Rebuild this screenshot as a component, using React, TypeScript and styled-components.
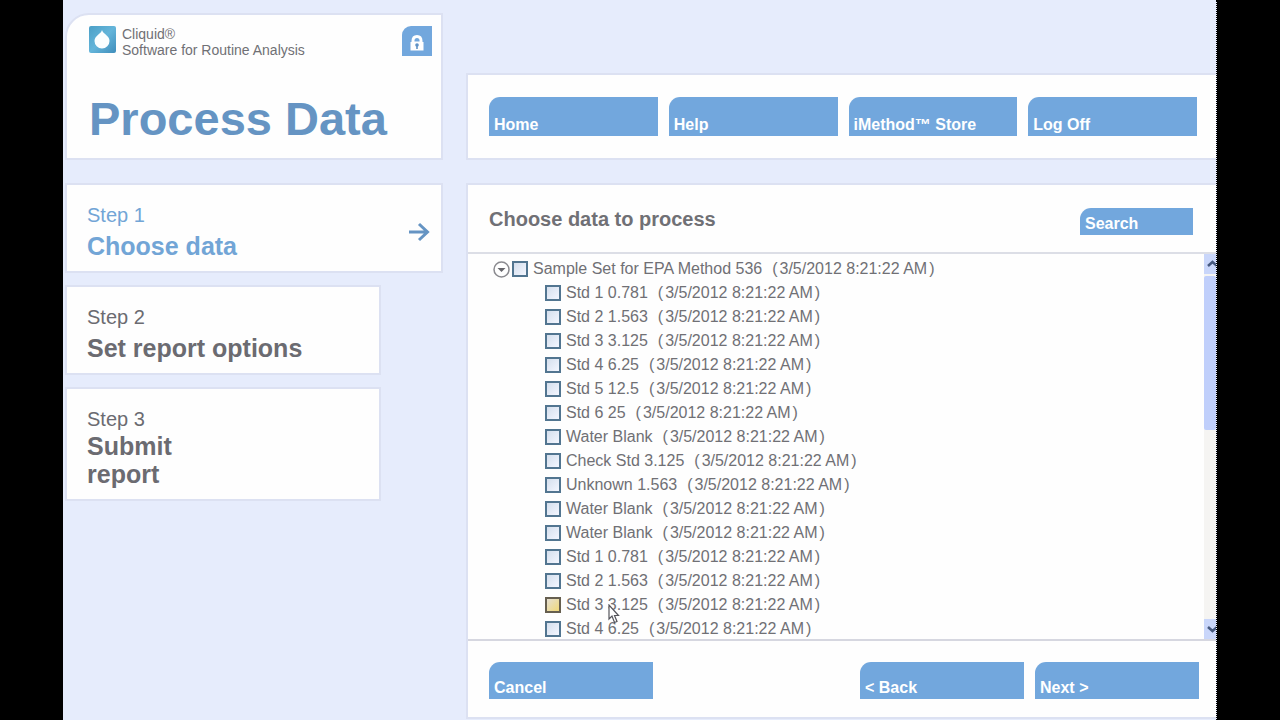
import React from "react";
import styled, { createGlobalStyle } from "styled-components";

const GlobalStyle = createGlobalStyle`
  * { box-sizing: border-box; }
  body {
    margin: 0;
    background: #000;
    font-family: "Liberation Sans", Arial, sans-serif;
    color: #707075;
  }
  button { font-family: inherit; cursor: pointer; }
`;

const Screen = styled.div`
  display: grid;
  grid-template-columns: 378px minmax(0, 1fr);
  grid-template-rows: auto 1fr;
  column-gap: 23px;
  row-gap: 23px;
  min-height: 100vh;
  margin: 0 63px;
  padding: 13px 0 1px 2px;
  background: #e6ecfc;
  border-right: 1px dotted #000;
`;

const Card = styled.section`
  background: #fefefe;
  border: 2px solid #dce1f2;
`;

const TitleCard = styled(Card)`
  display: flex;
  flex-direction: column;
  gap: 33px;
  padding: 11px 9px 11px 22px;
  border-top-left-radius: 24px;
`;

const Brand = styled.header`
  display: flex;
  align-items: flex-start;
  gap: 6px;
`;

const BrandText = styled.p`
  flex: 1;
  margin: 0;
  font-size: 14px;
  line-height: 16px;
`;

const LockButton = styled.button`
  display: flex;
  align-items: flex-end;
  justify-content: center;
  width: 30px;
  height: 30px;
  padding: 0 0 5px;
  border: 0;
  border-top-left-radius: 9px;
  background: #72a7dd;
`;

const PageTitle = styled.h1`
  margin: 0;
  font-size: 47px;
  line-height: 56px;
  color: #6594c3;
`;

const NavCard = styled(Card)`
  align-self: end;
  display: grid;
  grid-template-columns: repeat(4, 1fr);
  gap: 11px;
  padding: 22px 19px 22px 21px;
  border-right: 0;
`;

const ActionButton = styled.button<{ $width?: number; $height: number }>`
  width: ${(p) => (p.$width ? `${p.$width}px` : "100%")};
  height: ${(p) => p.$height}px;
  display: flex;
  align-items: flex-end;
  padding: 0 5px 2px;
  border: 0;
  border-top-left-radius: 11px;
  background: #72a7dd;
  color: #fff;
  font-size: 16px;
  font-weight: 700;
  line-height: 18px;
  text-align: left;
`;

const Steps = styled.nav`
  display: flex;
  flex-direction: column;
  align-items: flex-start;
  gap: 12px;
`;

const StepCard = styled.a<{ $active?: boolean }>`
  display: flex;
  align-items: center;
  justify-content: space-between;
  width: ${(p) => (p.$active ? "100%" : "316px")};
  padding: 18px 11px 11px 20px;
  background: #fefefe;
  border: 2px solid #dce1f2;
  color: ${(p) => (p.$active ? "#72a5d6" : "#6b6b71")};
  text-decoration: none;
`;

const StepText = styled.span<{ $tight?: boolean }>`
  display: flex;
  flex-direction: column;
  gap: ${(p) => (p.$tight ? 1 : 5)}px;
`;

const StepNumber = styled.span`
  font-size: 20px;
  line-height: 24px;
`;

const StepName = styled.strong`
  font-size: 25px;
  line-height: 28px;
  white-space: pre-line;
`;

const Panel = styled(Card)`
  display: flex;
  flex-direction: column;
  border-right: 0;
`;

const PanelHeader = styled.header`
  display: flex;
  align-items: center;
  justify-content: space-between;
  padding: 22px 23px 17px 21px;
`;

const PanelTitle = styled.h2`
  margin: 0 0 4px;
  font-size: 20px;
  line-height: 24px;
`;

const ListArea = styled.div`
  display: flex;
  height: 389px;
  overflow: hidden;
  border-top: 2px solid #dcdee6;
  border-bottom: 2px solid #d6d7e0;
`;

const Tree = styled.ul`
  flex: 1;
  margin: 0;
  padding: 3px 0 0 25px;
  list-style: none;
`;

const Children = styled.ul`
  margin: 0;
  padding: 0 0 0 52px;
  list-style: none;
`;

const Row = styled.div`
  position: relative;
  display: flex;
  align-items: center;
  gap: 2px;
  height: 24px;
`;

const Toggle = styled.button`
  display: flex;
  padding: 0;
  border: 0;
  background: none;
`;

const CheckLabel = styled.label`
  display: flex;
  align-items: center;
  font-size: 16px;
  line-height: 24px;
  white-space: nowrap;
`;

const Checkbox = styled.input<{ $hover?: boolean }>`
  appearance: none;
  width: 16px;
  height: 16px;
  margin: 0 5px 0 0;
  border: 2px solid ${(p) => (p.$hover ? "#665f50" : "#527590")};
  background: ${(p) =>
    p.$hover
      ? "linear-gradient(135deg, #e6e0d4, #f0d878)"
      : "linear-gradient(135deg, #d5dfed, #f3f6ff)"};
`;

const Stamp = styled.span`
  display: flex;
  gap: 2px;
  margin-left: 10px;
`;

const Pointer = styled.svg`
  position: absolute;
  left: 63px;
  top: 11px;
  z-index: 1;
`;

const ScrollBar = styled.div`
  display: flex;
  flex-direction: column;
  width: 12px;
  background: #f5f4f2;
`;

const ScrollArrow = styled.button`
  display: flex;
  align-items: center;
  justify-content: flex-end;
  height: 20px;
  padding: 0;
  border: 0;
  background: #c9d6fa;
`;

const ScrollTrack = styled.div`
  flex: 1;
  padding-top: 2px;
`;

const ScrollThumb = styled.div`
  height: 45%;
  border-radius: 2px;
  background: #c0cffb;
`;

const PanelFooter = styled.footer`
  display: flex;
  gap: 11px;
  padding: 21px 17px 18px 21px;
`;

const FooterSpacer = styled.span`
  flex: 1;
`;

const STAMP = "3/5/2012 8:21:22 AM";

const SAMPLES = [
  "Std 1 0.781",
  "Std 2 1.563",
  "Std 3 3.125",
  "Std 4 6.25",
  "Std 5 12.5",
  "Std 6 25",
  "Water Blank",
  "Check Std 3.125",
  "Unknown 1.563",
  "Water Blank",
  "Water Blank",
  "Std 1 0.781",
  "Std 2 1.563",
  "Std 3 3.125",
  "Std 4 6.25",
];

const HOVERED = 13;

function Sample({ name, hover }: { name: string; hover?: boolean }) {
  return (
    <CheckLabel>
      <Checkbox type="checkbox" $hover={hover} />
      {name}
      <Stamp>
        <span>(</span>
        <span>{STAMP}</span>
        <span>)</span>
      </Stamp>
    </CheckLabel>
  );
}

function DropLogo() {
  return (
    <svg width="27" height="27" viewBox="0 0 27 27" aria-hidden="true">
      <defs>
        <linearGradient id="drop" x1="0" y1="0" x2="1" y2="1">
          <stop offset="0" stopColor="#4b9fc6" />
          <stop offset=".5" stopColor="#64b5da" />
          <stop offset="1" stopColor="#3f8dbb" />
        </linearGradient>
      </defs>
      <rect width="27" height="27" rx="2" fill="url(#drop)" />
      <path d="M13 4C12 8 5.500 9.500 5.500 15a7.500 7.500 0 0 0 15 0C20.500 9.500 14 8 13 4z" fill="#fbfeff" />
    </svg>
  );
}

function LockIcon() {
  return (
    <svg width="16" height="17" viewBox="0 0 16 17" aria-hidden="true">
      <path d="M1.500 16.500V8H2.500V7Q2.500 1 8 1T13.500 7V8H14.500V16.500z" fill="#fff" />
      <path d="M5.500 7.500V6.500Q5.500 4 8 4T10.500 6.500V7.500z" fill="#72a7dd" />
      <circle cx="8" cy="11" r="1.800" fill="#5f92c6" />
      <path d="M7.200 11h1.600v4H7.200z" fill="#5f92c6" />
    </svg>
  );
}

export default function App() {
  return (
    <>
      <GlobalStyle />
      <Screen>
        <TitleCard>
          <Brand>
            <DropLogo />
            <BrandText>
              Cliquid®
              <br />
              Software for Routine Analysis
            </BrandText>
            <LockButton aria-label="Lock">
              <LockIcon />
            </LockButton>
          </Brand>
          <PageTitle>Process Data</PageTitle>
        </TitleCard>

        <NavCard as="nav">
          {["Home", "Help", "iMethod™ Store", "Log Off"].map((label) => (
            <ActionButton key={label} $height={39}>
              {label}
            </ActionButton>
          ))}
        </NavCard>

        <Steps>
          <StepCard href="#choose" $active>
            <StepText>
              <StepNumber>Step 1</StepNumber>
              <StepName>Choose data</StepName>
            </StepText>
            <svg width="22" height="20" viewBox="0 0 22 20" aria-hidden="true">
              <path d="M1 10H19M11 2L19.500 10L11 18" fill="none" stroke="#6594c3" strokeWidth="3" />
            </svg>
          </StepCard>
          <StepCard href="#options">
            <StepText>
              <StepNumber>Step 2</StepNumber>
              <StepName>Set report options</StepName>
            </StepText>
          </StepCard>
          <StepCard href="#submit">
            <StepText $tight>
              <StepNumber>Step 3</StepNumber>
              <StepName>{"Submit\nreport"}</StepName>
            </StepText>
          </StepCard>
        </Steps>

        <Panel>
          <PanelHeader>
            <PanelTitle>Choose data to process</PanelTitle>
            <ActionButton $width={113} $height={27}>
              Search
            </ActionButton>
          </PanelHeader>
          <ListArea>
            <Tree>
              <li>
                <Row>
                  <Toggle aria-label="Collapse">
                    <svg width="17" height="17" viewBox="0 0 17 17" aria-hidden="true">
                      <circle cx="8.500" cy="8.500" r="7.500" fill="#fff" stroke="#8b8b90" strokeWidth="1.500" />
                      <path d="M4.500 7h8L8.500 11z" fill="#66666c" />
                    </svg>
                  </Toggle>
                  <Sample name="Sample Set for EPA Method 536" />
                </Row>
                <Children>
                  {SAMPLES.map((name, i) => (
                    <li key={i}>
                      <Row>
                        <Sample name={name} hover={i === HOVERED} />
                        {i === HOVERED && (
                          <Pointer width="12" height="20" viewBox="0 0 12 20" aria-hidden="true">
                            <path
                              d="M1 1V15L4 12L6.500 18.500L9 17.500L6.500 11.500H10.500z"
                              fill="#fff"
                              stroke="#55555c"
                              strokeWidth="1.200"
                            />
                          </Pointer>
                        )}
                      </Row>
                    </li>
                  ))}
                </Children>
              </li>
            </Tree>
            <ScrollBar>
              <ScrollArrow aria-label="Scroll up">
                <svg width="9" height="8" viewBox="0 0 9 8" aria-hidden="true">
                  <path d="M1 6L5.500 2L10 6" fill="none" stroke="#46597f" strokeWidth="2.500" />
                </svg>
              </ScrollArrow>
              <ScrollTrack>
                <ScrollThumb />
              </ScrollTrack>
              <ScrollArrow aria-label="Scroll down">
                <svg width="9" height="8" viewBox="0 0 9 8" aria-hidden="true">
                  <path d="M1 2L5.500 6L10 2" fill="none" stroke="#46597f" strokeWidth="2.500" />
                </svg>
              </ScrollArrow>
            </ScrollBar>
          </ListArea>
          <PanelFooter>
            <ActionButton $width={164} $height={37}>
              Cancel
            </ActionButton>
            <FooterSpacer />
            <ActionButton $width={164} $height={37}>
              {"< Back"}
            </ActionButton>
            <ActionButton $width={164} $height={37}>
              {"Next >"}
            </ActionButton>
          </PanelFooter>
        </Panel>
      </Screen>
    </>
  );
}
